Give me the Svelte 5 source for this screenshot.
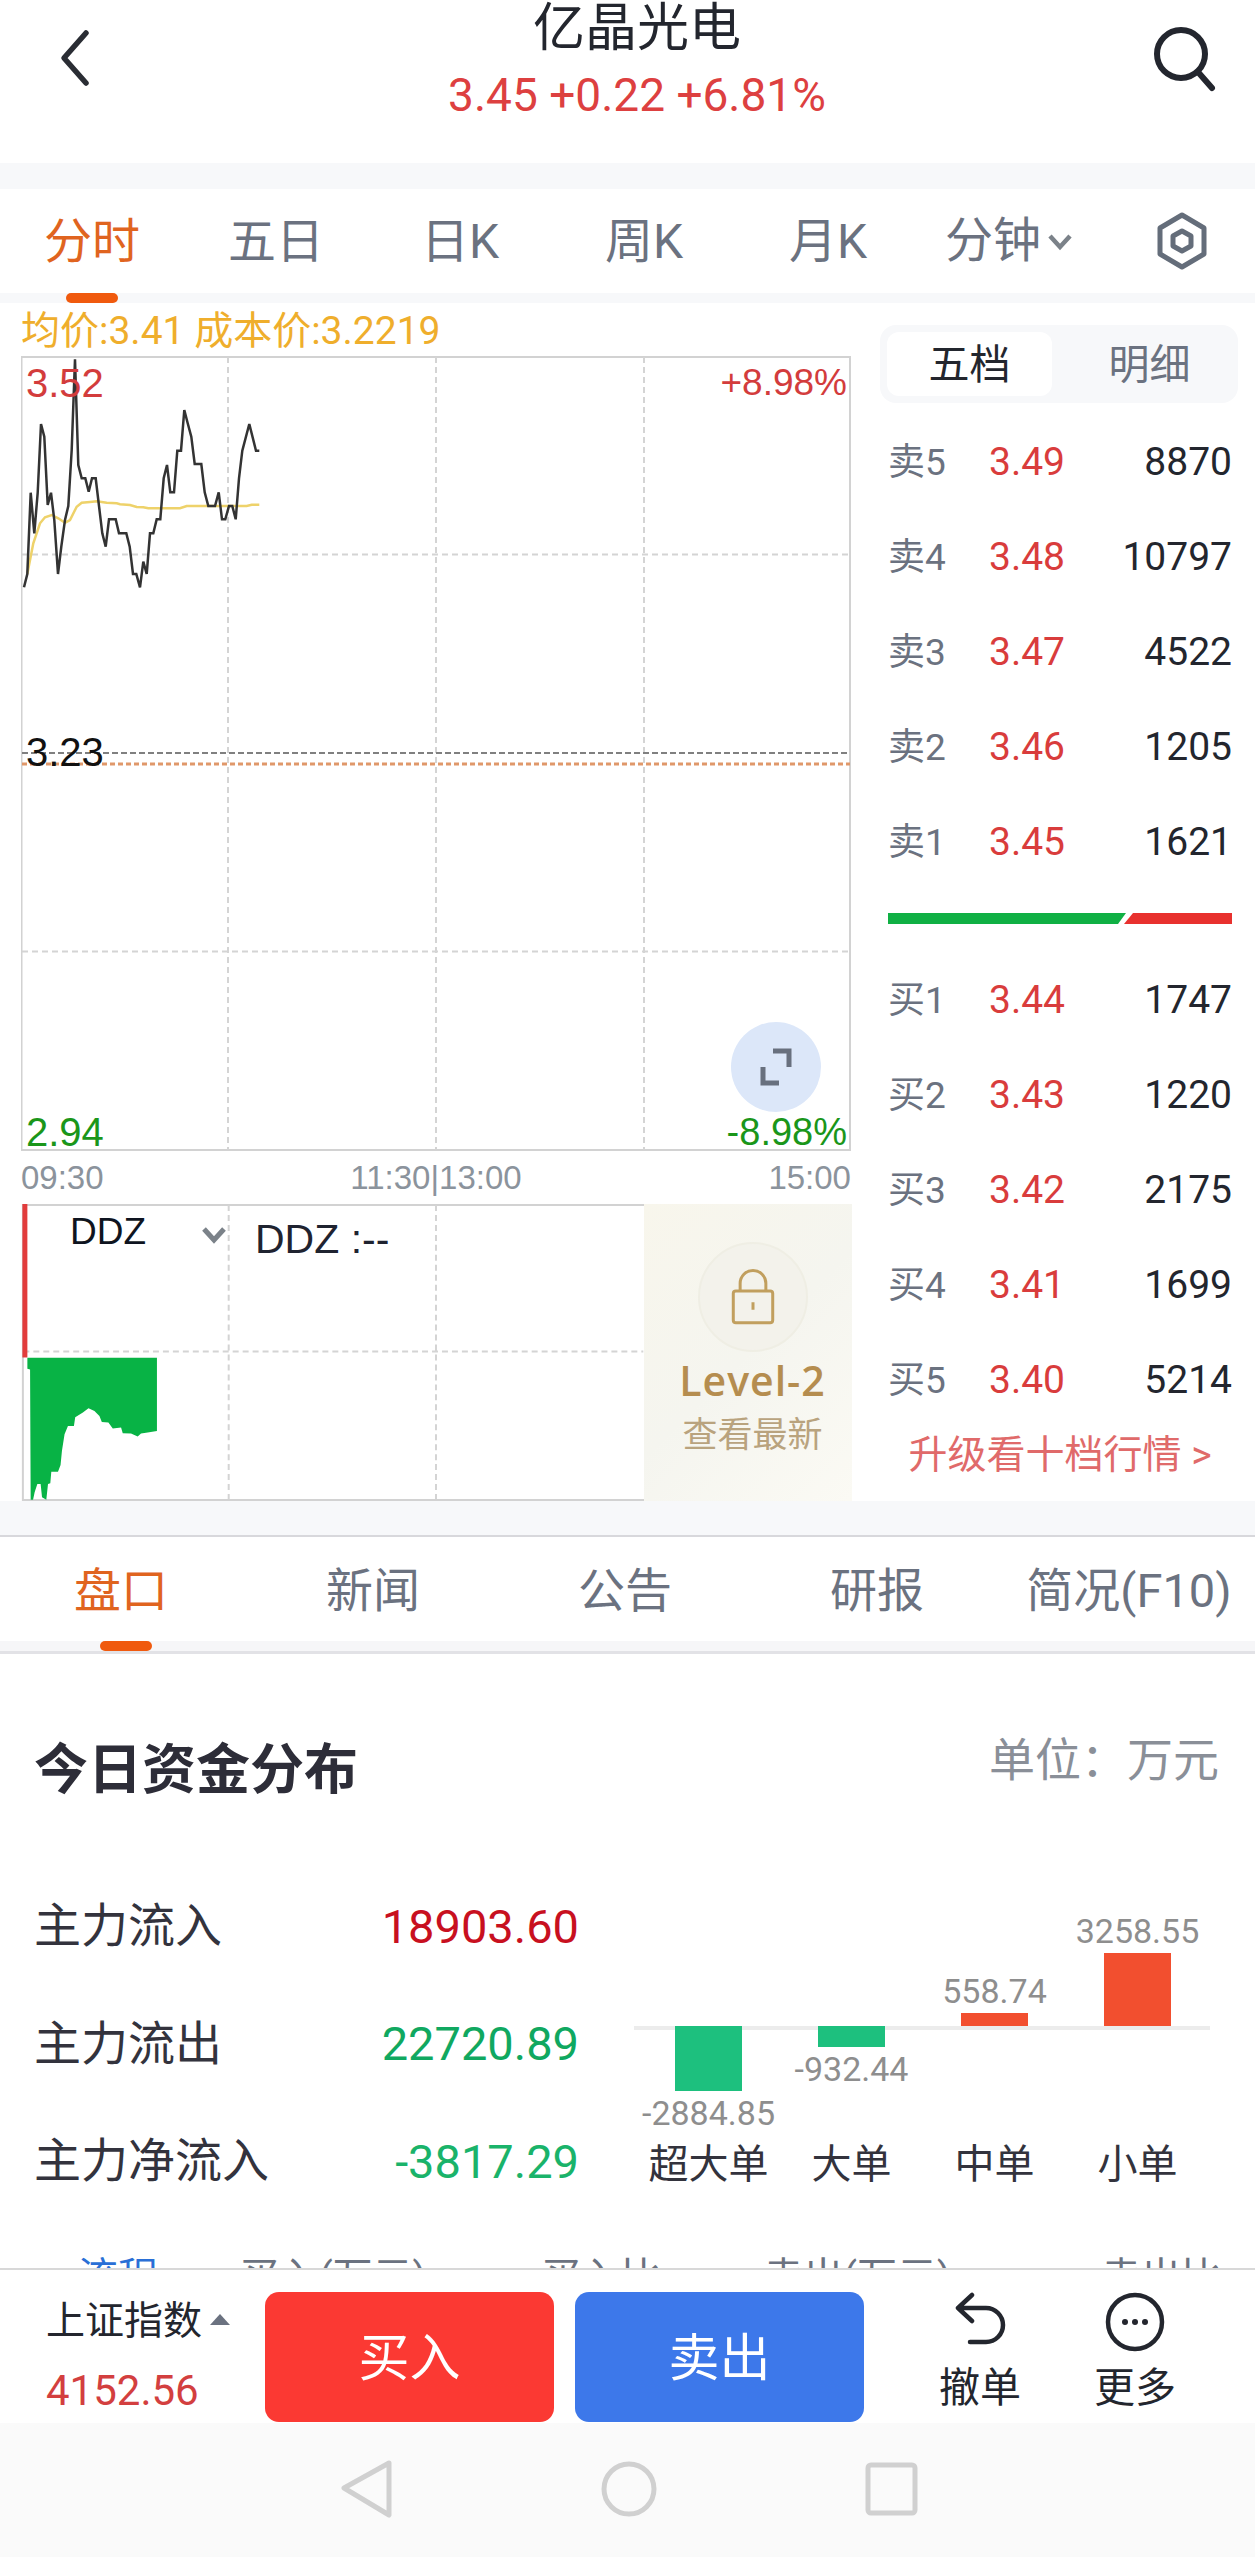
<script>
  const tabs = ['分时', '五日', '日K', '周K', '月K'];
  const sells = [['卖5','3.49','8870'],['卖4','3.48','10797'],['卖3','3.47','4522'],['卖2','3.46','1205'],['卖1','3.45','1621']];
  const buys = [['买1','3.44','1747'],['买2','3.43','1220'],['买3','3.42','2175'],['买4','3.41','1699'],['买5','3.40','5214']];
  const tabs2 = ['盘口','新闻','公告','研报','简况(F10)'];
  const funds = [['主力流入','18903.60','up'],['主力流出','22720.89','down'],['主力净流入','-3817.29','down2']];
  const flows = [
    { name: '超大单', value: '-2884.85', h: 65, neg: true },
    { name: '大单', value: '-932.44', h: 21, neg: true },
    { name: '中单', value: '558.74', h: 13, neg: false },
    { name: '小单', value: '3258.55', h: 73, neg: false }
  ];
  const price = [[72,862],[82,822],[92,578],[103,700],[113,578],[123,372],[133,410],[143,615],[153,578],[163,660],[174,822],[184,740],[195,660],[205,618],[215,450],[225,178],[235,495],[245,535],[256,535],[266,575],[276,535],[287,535],[297,618],[307,700],[317,740],[327,658],[347,658],[357,700],[379,700],[389,740],[399,822],[409,822],[420,862],[430,785],[440,822],[450,700],[460,700],[470,658],[481,658],[491,535],[501,495],[511,577],[522,577],[532,452],[543,452],[553,330],[563,370],[574,410],[584,492],[604,492],[614,577],[625,618],[645,618],[656,577],[666,658],[676,658],[687,618],[697,618],[707,658],[717,535],[727,452],[748,372],[768,452],[778,452]];
  const avg = [[82,822],[100,730],[120,670],[135,652],[155,645],[175,655],[195,668],[210,660],[230,620],[245,608],[270,606],[290,604],[320,608],[350,610],[360,613],[390,615],[410,621],[430,622],[445,625],[540,625],[560,618],[740,618],[755,614],[778,614]];
  const ddz = [[78,535],[468,535],[468,755],[440,760],[420,763],[410,772],[390,763],[365,762],[360,745],[335,748],[322,730],[302,728],[295,710],[280,695],[262,687],[245,700],[222,714],[218,740],[200,740],[190,765],[182,815],[178,858],[170,878],[150,878],[147,913],[140,915],[135,962],[122,955],[118,915],[108,915],[100,940],[95,962],[88,962],[86,570],[78,568]];
  const line = (pts, oy) => pts.map(([x, y]) => `${(x / 3).toFixed(1)},${(oy + y / 3).toFixed(1)}`).join(' ');
</script>

<div class="page">
  <header class="top">
    <svg class="back" viewBox="0 0 40 60"><path d="M30 6 L8 31 L30 56" /></svg>
    <div class="title">
      <div class="name">亿晶光电</div>
      <div class="quote">3.45 +0.22 +6.81%</div>
    </div>
    <svg class="search" viewBox="0 0 70 70"><circle cx="31" cy="30" r="24" /><path d="M48 48 L62 64" /></svg>
  </header>

  <nav class="tabs">
    {#each tabs as t, i}
      <div class="tab" class:on={i === 0}>{t}</div>
    {/each}
    <div class="tab minute">分钟<svg viewBox="0 0 26 18"><path d="M3 3 L13 14 L23 3" /></svg></div>
    <svg class="gear" viewBox="0 0 60 60"><path d="M30 4 L52 17 V43 L30 56 L8 43 V17 Z" /><path d="M30 20 L39 25 V35 L30 40 L21 35 V25 Z" /></svg>
    <span class="mark"></span>
  </nav>

  <section class="market">
    <div class="left">
      <div class="avg">均价:3.41 成本价:3.2219</div>
      <div class="chart">
        <svg viewBox="21 356 830 795">
          <rect x="21.5" y="357" width="828.5" height="793" class="frame" />
          <path class="dash" d="M228 357V1150M436 357V1150M644 357V1150M22 554.5H850M22 951.5H850" />
          <path class="pre" d="M22 753H850" />
          <path class="cost" d="M22 764H850" />
          <polyline class="avgl" points={line(avg, 300)} />
          <polyline class="pl" points={line(price, 300)} />
        </svg>
        <span class="lb hi">3.52</span>
        <span class="lb hip">+8.98%</span>
        <span class="lb mid">3.23</span>
        <span class="lb lo">2.94</span>
        <span class="lb lop">-8.98%</span>
        <div class="expand">
          <svg viewBox="0 0 50 50"><path d="M22 9H38V25M12 25V41H28" /></svg>
        </div>
      </div>
      <div class="times"><span>09:30</span><span>11:30|13:00</span><span>15:00</span></div>
      <div class="ddz">
        <svg viewBox="21 1204 830 298">
          <rect x="21.5" y="1205" width="828.5" height="296" class="frame" />
          <path class="dash" d="M228 1205V1500M436 1205V1500M22 1352H644" />
          <rect x="21" y="1204" width="5" height="154" fill="#e23c3c" />
          <polygon points={line(ddz, 1180)} fill="#08b345" />
        </svg>
        <span class="ddz-sel">DDZ</span>
        <svg class="ddz-chev" viewBox="0 0 26 18"><path d="M3 3 L13 14 L23 3" /></svg>
        <span class="ddz-val">DDZ :--</span>
        <div class="lock">
          <div class="lock-ring">
            <svg viewBox="0 0 60 70"><rect x="7" y="28" width="46" height="37" rx="3" /><path d="M15 28V19a15 15 0 0 1 30 0V28M30 41V50" /></svg>
          </div>
          <div class="lv">Level-2</div>
          <div class="see">查看最新</div>
        </div>
      </div>
    </div>

    <div class="book">
      <div class="seg"><span class="seg-on">五档</span><span class="seg-off">明细</span></div>
      <div class="rows">
        {#each sells as r}
          <div class="row"><span class="k">{r[0]}</span><span class="p">{r[1]}</span><span class="q">{r[2]}</span></div>
        {/each}
      </div>
      <svg class="ratio" viewBox="0 0 344 11" preserveAspectRatio="none"><polygon points="0,0 238,0 230,11 0,11" fill="#10b044" /><polygon points="245,0 344,0 344,11 236,11" fill="#e8312e" /></svg>
      <div class="rows buys">
        {#each buys as r}
          <div class="row"><span class="k">{r[0]}</span><span class="p">{r[1]}</span><span class="q">{r[2]}</span></div>
        {/each}
      </div>
      <div class="upgrade">升级看十档行情 &gt;</div>
    </div>
  </section>

  <div class="gap"></div>

  <nav class="tabs2">
    {#each tabs2 as t, i}
      <div class="tab2" class:on={i === 0}>{t}</div>
    {/each}
    <span class="mark2"></span>
  </nav>

  <main class="content">
    <div class="head">
      <h2>今日资金分布</h2>
      <span>单位：万元</span>
    </div>
    <div class="fund">
      <div class="fund-list">
        {#each funds as f}
          <div class="fund-row"><span>{f[0]}</span><b class={f[2]}>{f[1]}</b></div>
        {/each}
      </div>
      <div class="flow">
        <div class="flow-up">
          {#each flows as f}
            <div class="col">
              {#if !f.neg}
                <span class="fv">{f.value}</span>
                <i class="bar red" style="height:{f.h}px"></i>
              {/if}
            </div>
          {/each}
        </div>
        <div class="axis"></div>
        <div class="flow-down">
          {#each flows as f}
            <div class="col">
              {#if f.neg}
                <i class="bar green" style="height:{f.h}px"></i>
                <span class="fv">{f.value}</span>
              {/if}
            </div>
          {/each}
        </div>
        <div class="flow-names">
          {#each flows as f}<span>{f.name}</span>{/each}
        </div>
      </div>
    </div>
    <div class="thead">
      <span class="th1">流程</span><span class="th2">买入(万元)</span><span class="th3">买入比</span><span class="th4">卖出(万元)</span><span class="th5">卖出比</span>
    </div>
  </main>

  <footer class="foot">
    <div class="idx">
      <div class="idx-n">上证指数<i class="tri"></i></div>
      <div class="idx-v">4152.56</div>
    </div>
    <button class="btn buy">买入</button>
    <button class="btn sell">卖出</button>
    <div class="act undo">
      <svg viewBox="0 0 60 60"><path d="M22 3 L8 16 L22 29 M8 16 H36 a17 17 0 0 1 0 34 H20" /></svg>
      <span>撤单</span>
    </div>
    <div class="act more">
      <svg viewBox="0 0 60 60"><circle cx="30" cy="30" r="27" /><circle class="dot" cx="20" cy="30" r="3" /><circle class="dot" cx="30" cy="30" r="3" /><circle class="dot" cx="40" cy="30" r="3" /></svg>
      <span>更多</span>
    </div>
  </footer>

  <div class="sys">
    <svg viewBox="0 0 60 60"><path d="M52 5 L7 30 L52 57 Z" /></svg>
    <svg viewBox="0 0 60 60"><circle cx="30" cy="31" r="25" /></svg>
    <svg viewBox="0 0 60 60"><rect x="7" y="7" width="47" height="48" rx="3" /></svg>
  </div>
</div>

<style>
  :global(body) { margin: 0; background: #fff; font-family: Roboto, "Noto Sans CJK SC", sans-serif; }
  .page { width: 1255px; height: 2557px; overflow: hidden; display: flex; flex-direction: column; background: #fff; }
  svg { display: block; fill: none; }

  .top { height: 189px; box-sizing: border-box; border-bottom: 26px solid #f7f8fa; display: flex; position: relative; justify-content: center; flex: none; background: #fff; }
  .back { position: absolute; left: 56px; top: 27px; width: 40px; height: 60px; }
  .back path { stroke: #2a2d34; stroke-width: 5.5; stroke-linecap: round; stroke-linejoin: round; }
  .search { position: absolute; left: 1150px; top: 24px; width: 70px; height: 70px; }
  .search circle, .search path { stroke: #23262e; stroke-width: 6; stroke-linecap: round; }
  .title { text-align: center; padding-left: 19px; }
  .name { font-size: 52px; line-height: 56px; color: #23262e; margin-top: 1px; }
  .quote { font-size: 46px; line-height: 54px; color: #dd4040; margin-top: 11px; }

  .tabs { height: 114px; box-sizing: border-box; border-bottom: 10px solid #f7f8fa; display: flex; position: relative; background: #fff; flex: none; }
  .tab { width: 184px; text-align: center; font-size: 48px; line-height: 106px; color: #6b7280; flex: none; }
  .tab.on { color: #e0641f; }
  .minute { display: flex; align-items: center; justify-content: center; padding-right: 6px; box-sizing: border-box; }
  .minute svg { width: 26px; height: 18px; margin-left: 6px; margin-top: 2px; }
  .minute path { stroke: #7b8289; stroke-width: 4.5; }
  .gear { width: 60px; height: 60px; position: absolute; left: 1152px; top: 22px; }
  .gear path { stroke: #646d7a; stroke-width: 5; stroke-linejoin: round; }
  .mark { position: absolute; left: 66px; top: 104px; width: 52px; height: 10px; border-radius: 5px; background: #f05a0e; }

  .market { display: flex; height: 1198px; flex: none; }
  .left { width: 830px; margin-left: 21px; margin-right: 21px; flex: none; }
  .avg { height: 53px; font-size: 39px; line-height: 56px; color: #efae2c; white-space: nowrap; }
  .chart { height: 795px; position: relative; width: 830px; }
  .chart > svg, .ddz > svg:first-child { width: 830px; height: 100%; }
  .frame { fill: none; stroke: #d2d2d2; stroke-width: 2; }
  .dash { stroke: #d4d4d4; stroke-width: 2; stroke-dasharray: 6 4; fill: none; }
  .pre { stroke: #808080; stroke-width: 2; stroke-dasharray: 6 3; }
  .cost { stroke: #e0986a; stroke-width: 3; stroke-dasharray: 5 3; }
  .avgl { stroke: #eed26a; stroke-width: 2.5; fill: none; }
  .pl { stroke: #333; stroke-width: 2.5; fill: none; }
  .lb { position: absolute; font-family: "Liberation Sans", sans-serif; font-size: 40px; line-height: 44px; }
  .hi { left: 5px; top: 5px; color: #d33c3c; }
  .hip { right: 4px; top: 5px; color: #d33c3c; font-size: 37px; }
  .mid { left: 5px; top: 374px; color: #111; }
  .lo { left: 5px; bottom: -3px; color: #1a961a; }
  .lop { right: 4px; bottom: -3px; color: #1a961a; font-size: 38px; }
  .expand { position: absolute; left: 710px; top: 666px; width: 90px; height: 90px; border-radius: 50%; background: #dce7f9; display: flex; align-items: center; justify-content: center; }
  .expand svg { width: 50px; height: 50px; }
  .expand path { stroke: #68707e; stroke-width: 5; }

  .times { height: 53px; display: flex; justify-content: space-between; align-items: center; font-family: "Liberation Sans", sans-serif; font-size: 33px; color: #8b939c; width: 830px; }
  .ddz { height: 297px; position: relative; width: 830px; }
  .ddz-sel { position: absolute; left: 49px; top: 6px; font-family: "Liberation Sans", sans-serif; font-size: 37px; line-height: 44px; color: #0e1420; }
  .ddz-chev { position: absolute; left: 180px; top: 22px; width: 26px; height: 18px; }
  .ddz-chev path { stroke: #7b8289; stroke-width: 5; }
  .ddz-val { position: absolute; left: 234px; top: 13px; font-family: "Liberation Sans", sans-serif; font-size: 41px; line-height: 44px; color: #1f2330; }
  .lock { position: absolute; left: 623px; top: 0; width: 208px; height: 297px; box-sizing: border-box; padding-left: 9px; background: linear-gradient(135deg, #f8f6ec, #f5f5ef 50%, #fbfaf4); display: flex; flex-direction: column; align-items: center; }
  .lock-ring { margin-top: 38px; width: 110px; height: 110px; box-sizing: border-box; border: 2px solid #efeee4; border-radius: 50%; background: #f3f2eb; display: flex; align-items: center; justify-content: center; }
  .lock-ring svg { width: 52px; height: 60px; }
  .lock-ring rect, .lock-ring path { stroke: #c19f5e; stroke-width: 3.5; }
  .lv { font-family: "Open Sans", sans-serif; font-size: 41px; line-height: 50px; font-weight: 600; color: #b58d4f; margin-top: 3px; letter-spacing: 1px; }
  .see { font-size: 35px; line-height: 44px; color: #b9a37e; margin-top: 9px; }

  .book { flex: 1; position: relative; padding-left: 16px; }
  .seg { margin: 22px 0 0 -8px; width: 358px; height: 78px; box-sizing: border-box; background: #f7f8fa; border-radius: 16px; padding: 7px; display: flex; }
  .seg span { font-size: 41px; line-height: 66px; text-align: center; height: 64px; }
  .seg-on { width: 165px; background: #fff; border-radius: 12px; color: #23262e; }
  .seg-off { flex: 1; color: #6b7280; padding-left: 16px; }
  .rows { margin-top: 11px; width: 344px; }
  .row { height: 95px; display: grid; grid-template-columns: 101px 1fr auto; align-items: center; font-size: 39px; }
  .k { font-size: 37px; color: #6b7280; position: relative; top: -3px; }
  .p { color: #d93c3c; }
  .q { color: #23262e; }
  .ratio { width: 344px; height: 11px; margin-top: 24px; }
  .buys { margin-top: 28px; }
  .upgrade { margin-left: -16px; font-size: 39px; line-height: 56px; color: #e06a6a; text-align: center; width: 376px; }

  .gap { height: 36px; box-sizing: border-box; background: #f7f8fa; border-bottom: 2px solid #d8d8dc; flex: none; }

  .tabs2 { height: 104px; display: flex; position: relative; border-bottom: 10px solid #f6f6f8; box-shadow: 0 3px 0 #e2e2e6; flex: none; margin-left: -5px; }
  .tab2 { width: 252px; flex: none; text-align: center; font-size: 47px; line-height: 108px; color: #6b7280; }
  .tab2.on { color: #e0641f; }
  .mark2 { position: absolute; left: 105px; top: 104px; width: 52px; height: 10px; border-radius: 5px; background: #f05a0e; }

  .content { height: 617px; overflow: hidden; flex: none; box-sizing: border-box; padding: 0 34px; }
  .head { display: flex; justify-content: space-between; margin-top: 91px; height: 121px; }
  .head h2 { margin: 0; font-size: 54px; line-height: 58px; font-weight: 700; color: #2d2d38; }
  .head span { font-size: 46px; line-height: 50px; color: #8a8f98; margin-top: -7px; margin-right: 2px; }
  .fund { display: flex; height: 355px; }
  .fund-list { width: 545px; flex: none; }
  .fund-row { height: 117.5px; display: flex; justify-content: space-between; align-items: center; font-size: 47px; color: #33333d; }
  .fund-row b { font-weight: 400; font-size: 47px; margin-top: 9px; }
  .up { color: #c8101f; }
  .down { color: #10a860; }
  .down2 { color: #1ab36a; }
  .flow { margin-left: 55px; width: 576px; margin-top: 3px; }
  .flow-up, .flow-down, .flow-names { display: grid; grid-template-columns: repeat(4, 143px); margin-left: 3px; }
  .flow-up { height: 160px; }
  .axis { height: 4px; background: #ececec; margin-bottom: -4px; }
  .flow-down { height: 114px; }
  .col { display: flex; flex-direction: column; align-items: center; }
  .flow-up .col { justify-content: flex-end; }
  .bar { display: block; width: 67px; position: relative; }
  .red { background: #f24f2f; }
  .green { background: #1dc07e; }
  .fv { font-size: 34px; line-height: 44px; color: #8e8e8e; white-space: nowrap; }
  .flow-names span { text-align: center; font-size: 40px; line-height: 50px; color: #33333d; }
  .thead { margin-top: 40px; height: 40px; font-size: 40px; line-height: 40px; color: #6b7280; display: flex; white-space: nowrap; }
  .th1 { margin-left: 44px; width: 162px; color: #2a6fd6; }
  .th2 { width: 304px; }
  .th3 { width: 224px; }
  .th4 { width: 340px; }

  .foot { height: 155px; box-sizing: border-box; border-top: 2px solid #d8d8d8; padding-top: 22px; background: #fff; flex: none; display: flex; position: relative; }
  .idx { width: 265px; padding-left: 46px; box-sizing: border-box; flex: none; }
  .idx-n { font-size: 39px; line-height: 50px; color: #23262e; display: flex; align-items: center; margin-top: 4px; white-space: nowrap; }
  .tri { width: 0; height: 0; border-left: 10px solid transparent; border-right: 10px solid transparent; border-bottom: 11px solid #6b7280; margin-left: 8px; margin-top: -4px; }
  .idx-v { font-size: 42px; line-height: 50px; color: #d33f3f; margin-top: 20px; }
  .btn { width: 289px; height: 130px; border: 0; border-radius: 14px; color: #fff; font: 51px/134px Roboto, "Noto Sans CJK SC", sans-serif; padding: 0; flex: none; }
  .buy { background: #fb3933; margin-right: 21px; }
  .sell { background: #3d78ea; }
  .act { position: absolute; top: 22px; width: 100px; display: flex; flex-direction: column; align-items: center; }
  .undo { left: 930px; }
  .more { left: 1085px; }
  .act svg { width: 60px; height: 60px; }
  .act path, .act circle { stroke: #23262e; stroke-width: 4.5; stroke-linecap: round; stroke-linejoin: round; }
  .act .dot { fill: #23262e; stroke: none; }
  .act span { font-size: 41px; line-height: 50px; color: #23262e; margin-top: 11px; }

  .sys { flex: 1; background: #fafafa; display: flex; gap: 202px; padding: 35px 0 0 337px; }
  .sys svg { width: 60px; height: 60px; }
  .sys path, .sys circle, .sys rect { stroke: #d0d0d0; stroke-width: 5; stroke-linejoin: round; }
</style>
